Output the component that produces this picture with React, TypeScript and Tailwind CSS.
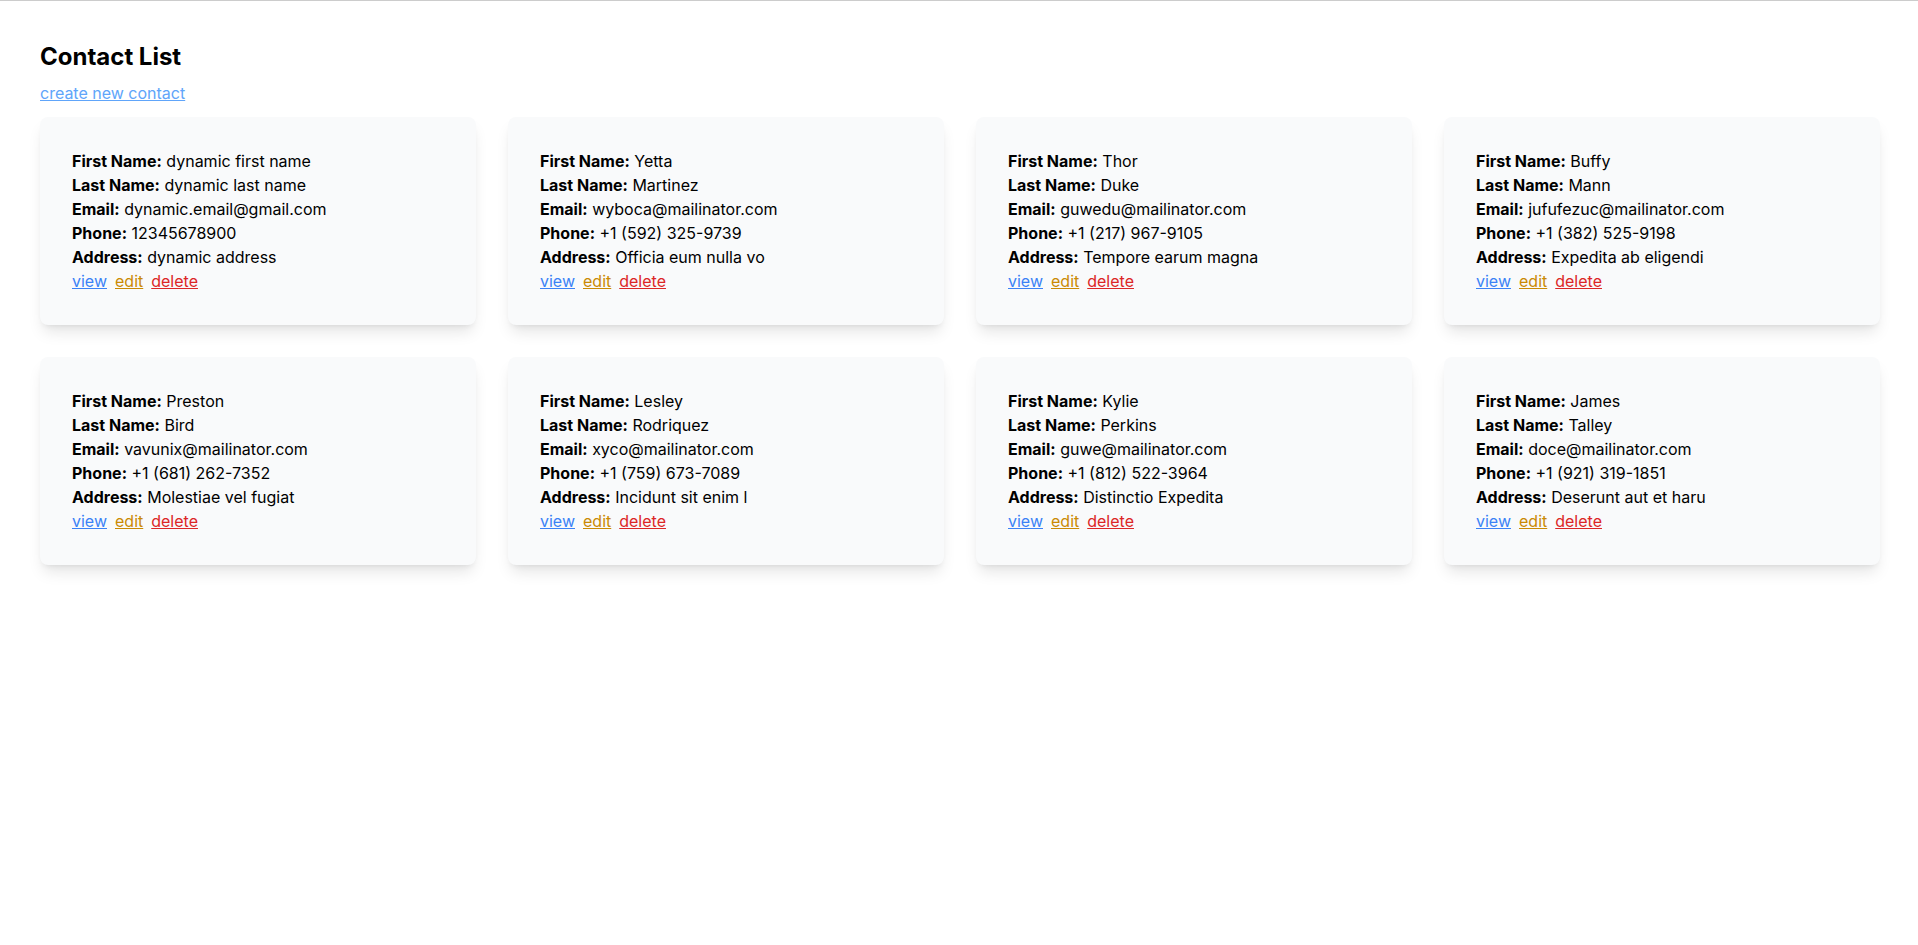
import React from 'react';

interface Contact {
  id: number;
  firstName: string;
  lastName: string;
  email: string;
  phone: string;
  address: string;
}

const contacts: Contact[] = [
  { id: 1, firstName: 'dynamic first name', lastName: 'dynamic last name', email: 'dynamic.email@gmail.com', phone: '12345678900', address: 'dynamic address' },
  { id: 2, firstName: 'Yetta', lastName: 'Martinez', email: 'wyboca@mailinator.com', phone: '+1 (592) 325-9739', address: 'Officia eum nulla vo' },
  { id: 3, firstName: 'Thor', lastName: 'Duke', email: 'guwedu@mailinator.com', phone: '+1 (217) 967-9105', address: 'Tempore earum magna' },
  { id: 4, firstName: 'Buffy', lastName: 'Mann', email: 'jufufezuc@mailinator.com', phone: '+1 (382) 525-9198', address: 'Expedita ab eligendi' },
  { id: 5, firstName: 'Preston', lastName: 'Bird', email: 'vavunix@mailinator.com', phone: '+1 (681) 262-7352', address: 'Molestiae vel fugiat' },
  { id: 6, firstName: 'Lesley', lastName: 'Rodriquez', email: 'xyco@mailinator.com', phone: '+1 (759) 673-7089', address: 'Incidunt sit enim l' },
  { id: 7, firstName: 'Kylie', lastName: 'Perkins', email: 'guwe@mailinator.com', phone: '+1 (812) 522-3964', address: 'Distinctio Expedita' },
  { id: 8, firstName: 'James', lastName: 'Talley', email: 'doce@mailinator.com', phone: '+1 (921) 319-1851', address: 'Deserunt aut et haru' },
];

const Field: React.FC<{ label: string; value: string }> = ({ label, value }) => (
  <p>
    <span className="font-bold">{label}:</span> {value}
  </p>
);

export default function App() {
  return (
    <div
      className="min-h-screen bg-white border-t border-[#cccccc] text-black"
      style={{ fontFamily: 'Inter, "Noto Sans", sans-serif' }}
    >
      <div className="pt-10 pl-10 pr-[38px]">
        <h1 className="text-2xl font-bold mb-2">Contact List</h1>
        <a href="#" className="text-[#60a5fa] underline">
          create new contact
        </a>

        <div className="grid grid-cols-4 gap-8 mt-3">
          {contacts.map((c) => (
            <div key={c.id} className="bg-[#f9fafb] rounded-lg shadow-lg p-8 text-base leading-6">
              <Field label="First Name" value={c.firstName} />
              <Field label="Last Name" value={c.lastName} />
              <Field label="Email" value={c.email} />
              <Field label="Phone" value={c.phone} />
              <Field label="Address" value={c.address} />
              <div className="flex gap-2">
                <a href="#" className="text-[#3b82f6] underline">view</a>
                <a href="#" className="text-[#ca8a04] underline">edit</a>
                <a href="#" className="text-[#dc2626] underline">delete</a>
              </div>
            </div>
          ))}
        </div>
      </div>
    </div>
  );
}
